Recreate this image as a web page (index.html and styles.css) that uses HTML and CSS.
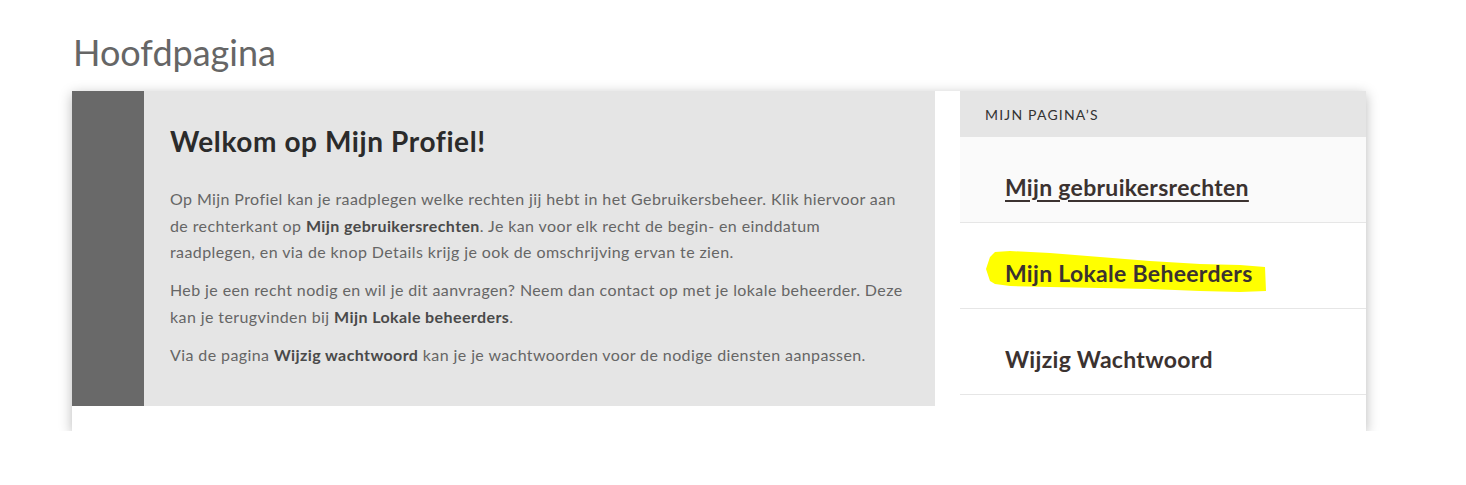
FILE: index.html
```html
<!DOCTYPE html>
<html lang="nl">
<head>
<meta charset="utf-8">
<title>Hoofdpagina</title>
<link rel="stylesheet" href="styles.css">
</head>
<body>
<main class="page">
  <h1 class="page-title">Hoofdpagina</h1>
  <section class="card">
    <div class="intro">
      <div class="intro-bar"></div>
      <div class="intro-body">
        <h2 class="intro-title">Welkom op Mijn Profiel!</h2>
        <p>Op Mijn Profiel kan je raadplegen welke rechten jij hebt in het Gebruikersbeheer. Klik hiervoor aan de rechterkant op <strong>Mijn gebruikersrechten</strong>. Je kan voor elk recht de begin- en einddatum raadplegen, en via de knop Details krijg je ook de omschrijving ervan te zien.</p>
        <p>Heb je een recht nodig en wil je dit aanvragen? Neem dan contact op met je lokale beheerder. Deze kan je terugvinden bij <strong>Mijn Lokale beheerders</strong>.</p>
        <p>Via de pagina <strong>Wijzig wachtwoord</strong> kan je je wachtwoorden voor de nodige diensten aanpassen.</p>
      </div>
    </div>
    <nav class="side">
      <div class="side-head">Mijn pagina’s</div>
      <ul class="side-list">
        <li class="side-item is-active"><a href="#">Mijn gebruikersrechten</a></li>
        <li class="side-item is-marked">
          <svg class="marker" viewBox="0 0 281 43" width="281" height="43" aria-hidden="true"><polygon fill="#ffff00" points="4,7 9,2 24,1 64,3 114,7 164,11 214,14 254,15 279,17 280,41 254,42 214,41 164,39 114,38 64,37 24,36 9,34 4,31 0,19"/></svg>
          <a href="#">Mijn Lokale Beheerders</a>
        </li>
        <li class="side-item"><a href="#">Wijzig Wachtwoord</a></li>
      </ul>
    </nav>
  </section>
</main>
</body>
</html>
```
FILE: styles.css
```css
* { box-sizing: border-box; }
html, body { margin: 0; background: #fff; }
body {
  font-family: Lato, "Open Sans", "Liberation Sans", sans-serif;
  color: #666;
}
.page {
  padding: 30px 0 0 72px;
}
.page-title {
  margin: 0 0 17px 1px;
  font-size: 36px;
  line-height: 44px;
  font-weight: 400;
  color: #666;
}
.card {
  width: 1294px;
  background: #fff;
  box-shadow: 0 3px 12px rgba(0, 0, 0, 0.28);
  padding-bottom: 25px;
  display: grid;
  grid-template-columns: 863px 406px;
  column-gap: 25px;
  align-items: start;
}
.intro {
  display: flex;
  background: #e5e5e5;
  min-height: 315px;
}
.intro-bar {
  width: 72px;
  flex: none;
  background: #696969;
}
.intro-body {
  padding: 33px 28px 20px 26px;
  flex: 1;
}
.intro-title {
  margin: 0 0 28px;
  font-size: 28px;
  line-height: 34px;
  font-weight: 700;
  letter-spacing: 0.6px;
  color: #2b2b2b;
}
.intro-body p {
  margin: 0 0 11.5px;
  font-size: 16px;
  line-height: 26.5px;
  font-weight: 400;
  letter-spacing: 0.4px;
  color: #666;
}
.intro-body strong {
  font-weight: 700;
  color: #4a4a4a;
}
.side-head {
  height: 46px;
  background: #e5e5e5;
  padding: 0 25px;
  display: flex;
  align-items: center;
  font-size: 14px;
  letter-spacing: 1.2px;
  text-transform: uppercase;
  color: #333;
}
.side-list {
  list-style: none;
  margin: 0;
  padding: 0;
}
.side-item {
  position: relative;
  height: 86px;
  border-bottom: 1px solid #e6e6e6;
  display: flex;
  align-items: center;
  padding: 14px 45px 0;
  background: #fff;
}
.side-item.is-active { background: #fafafa; }
.side-item a {
  position: relative;
  font-size: 23px;
  font-weight: 700;
  letter-spacing: 0.3px;
  color: #3b3230;
  text-decoration: none;
}
.side-item.is-active a {
  text-decoration: underline;
  text-underline-offset: 4px;
  text-decoration-thickness: 2px;
}
.marker {
  position: absolute;
  left: 26px;
  top: 27px;
}
```
